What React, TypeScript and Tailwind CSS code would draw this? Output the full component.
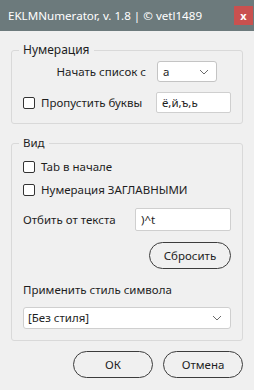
import React from "react";

const Chevron = () => (
  <svg width="10" height="6" viewBox="0 0 10 6" fill="none">
    <path d="M1 1l4 4 4-4" stroke="#6b6b6b" strokeWidth="1" />
  </svg>
);

const Checkbox = () => (
  <span className="inline-block w-[12px] h-[12px] border border-[#333] rounded-[2px] bg-white shrink-0" />
);

export default function App() {
  return (
    <div
      className="w-[254px] h-[390px] bg-[#f0f0f0] flex flex-col text-[11.5px] text-[#1e1e1e] leading-[18px]"
      style={{ fontFamily: '"Noto Sans", "Open Sans", sans-serif' }}
    >
      <div className="h-[31px] bg-[#6c7a7c] flex items-center pl-[8px] pr-[1px] shrink-0">
        <span className="text-white text-[11.6px] flex-1">EKLMNumerator, v. 1.8 | © vetl1489</span>
        <div className="w-[19px] h-[19px] bg-[#c9514f] flex items-center justify-center text-white text-[11px] font-bold leading-none">
          x
        </div>
      </div>
      <div className="flex flex-col px-[11px] pt-[10px]">
        <fieldset className="border border-[#d9d9d9] rounded-[3px] px-[11px] pb-[10px]">
          <legend className="ml-[-4px] px-[4px] text-[12px]">Нумерация</legend>
          <div className="flex items-center mt-[2px]">
            <span className="w-[123px] text-right">Начать список с</span>
            <div className="ml-[11px] w-[60px] h-[21px] bg-white border border-[#c4c4c4] rounded-[3px] flex items-center justify-between pl-[5px] pr-[7px]">
              <span>а</span>
              <Chevron />
            </div>
          </div>
          <div className="flex items-center mt-[10px]">
            <Checkbox />
            <span className="ml-[6px]">Пропустить буквы</span>
            <div className="ml-auto w-[75px] h-[21px] bg-white border border-[#cfcfcf] rounded-[2px] flex items-center pl-[5px]">
              ё,й,ъ,ь
            </div>
          </div>
        </fieldset>
        <fieldset className="mt-[10px] border border-[#d9d9d9] rounded-[3px] px-[11px] pb-[11px] flex flex-col">
          <legend className="ml-[-4px] px-[4px]">Вид</legend>
          <div className="flex items-center h-[20px] mt-[5px]">
            <Checkbox />
            <span className="ml-[6px]">Tab в начале</span>
          </div>
          <div className="flex items-center h-[20px] mt-[3px]">
            <Checkbox />
            <span className="ml-[6px]">Нумерация ЗАГЛАВНЫМИ</span>
          </div>
          <div className="flex items-center mt-[8px]">
            <span>Отбить от текста</span>
            <div className="ml-auto w-[96px] h-[23px] bg-white border border-[#cfcfcf] rounded-[2px] flex items-center pl-[5px]">
              )^t
            </div>
          </div>
          <div className="self-end mt-[11px] w-[82px] h-[27px] border border-[#3c3c3c] rounded-full flex items-center justify-center">
            Сбросить
          </div>
          <div className="mt-[12px]">Применить стиль символа</div>
          <div className="mt-[8px] h-[22px] bg-white border border-[#cfcfcf] rounded-[3px] flex items-center justify-between pl-[4px] pr-[8px]">
            <span>[Без стиля]</span>
            <Chevron />
          </div>
        </fieldset>
        <div className="flex justify-end gap-[10px] mt-[10px]">
          <div className="w-[80px] h-[27px] border border-[#3c3c3c] rounded-full flex items-center justify-center">
            ОК
          </div>
          <div className="w-[80px] h-[27px] border border-[#3c3c3c] rounded-full flex items-center justify-center">
            Отмена
          </div>
        </div>
      </div>
    </div>
  );
}
